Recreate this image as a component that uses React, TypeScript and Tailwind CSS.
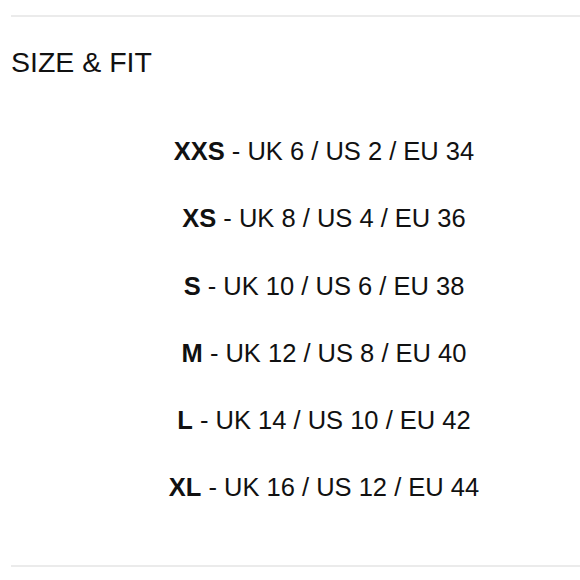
const sizes = [
  { label: "XXS", uk: 6, us: 2, eu: 34 },
  { label: "XS", uk: 8, us: 4, eu: 36 },
  { label: "S", uk: 10, us: 6, eu: 38 },
  { label: "M", uk: 12, us: 8, eu: 40 },
  { label: "L", uk: 14, us: 10, eu: 42 },
  { label: "XL", uk: 16, us: 12, eu: 44 },
];

export default function App() {
  return (
    <div className="w-[580px] h-[580px] bg-white pt-[15px] pl-[11px] font-['Liberation_Sans',Arial,sans-serif] text-[#111]">
      <div className="border-t-2 border-b-2 border-[#ebebeb] h-[552px]">
        <h2 className="mt-[28px] text-[28.5px] leading-[34px] font-normal">SIZE &amp; FIT</h2>

        {/* size table */}
        <ul className="mt-[39px] pl-[57px] flex flex-col items-center">
          {sizes.map((s) => (
            <li key={s.label} className="text-[25.5px] leading-[67.3px] whitespace-nowrap">
              <span className="font-bold">{s.label}</span> - UK {s.uk} / US {s.us} / EU {s.eu}
            </li>
          ))}
        </ul>
      </div>
    </div>
  );
}
